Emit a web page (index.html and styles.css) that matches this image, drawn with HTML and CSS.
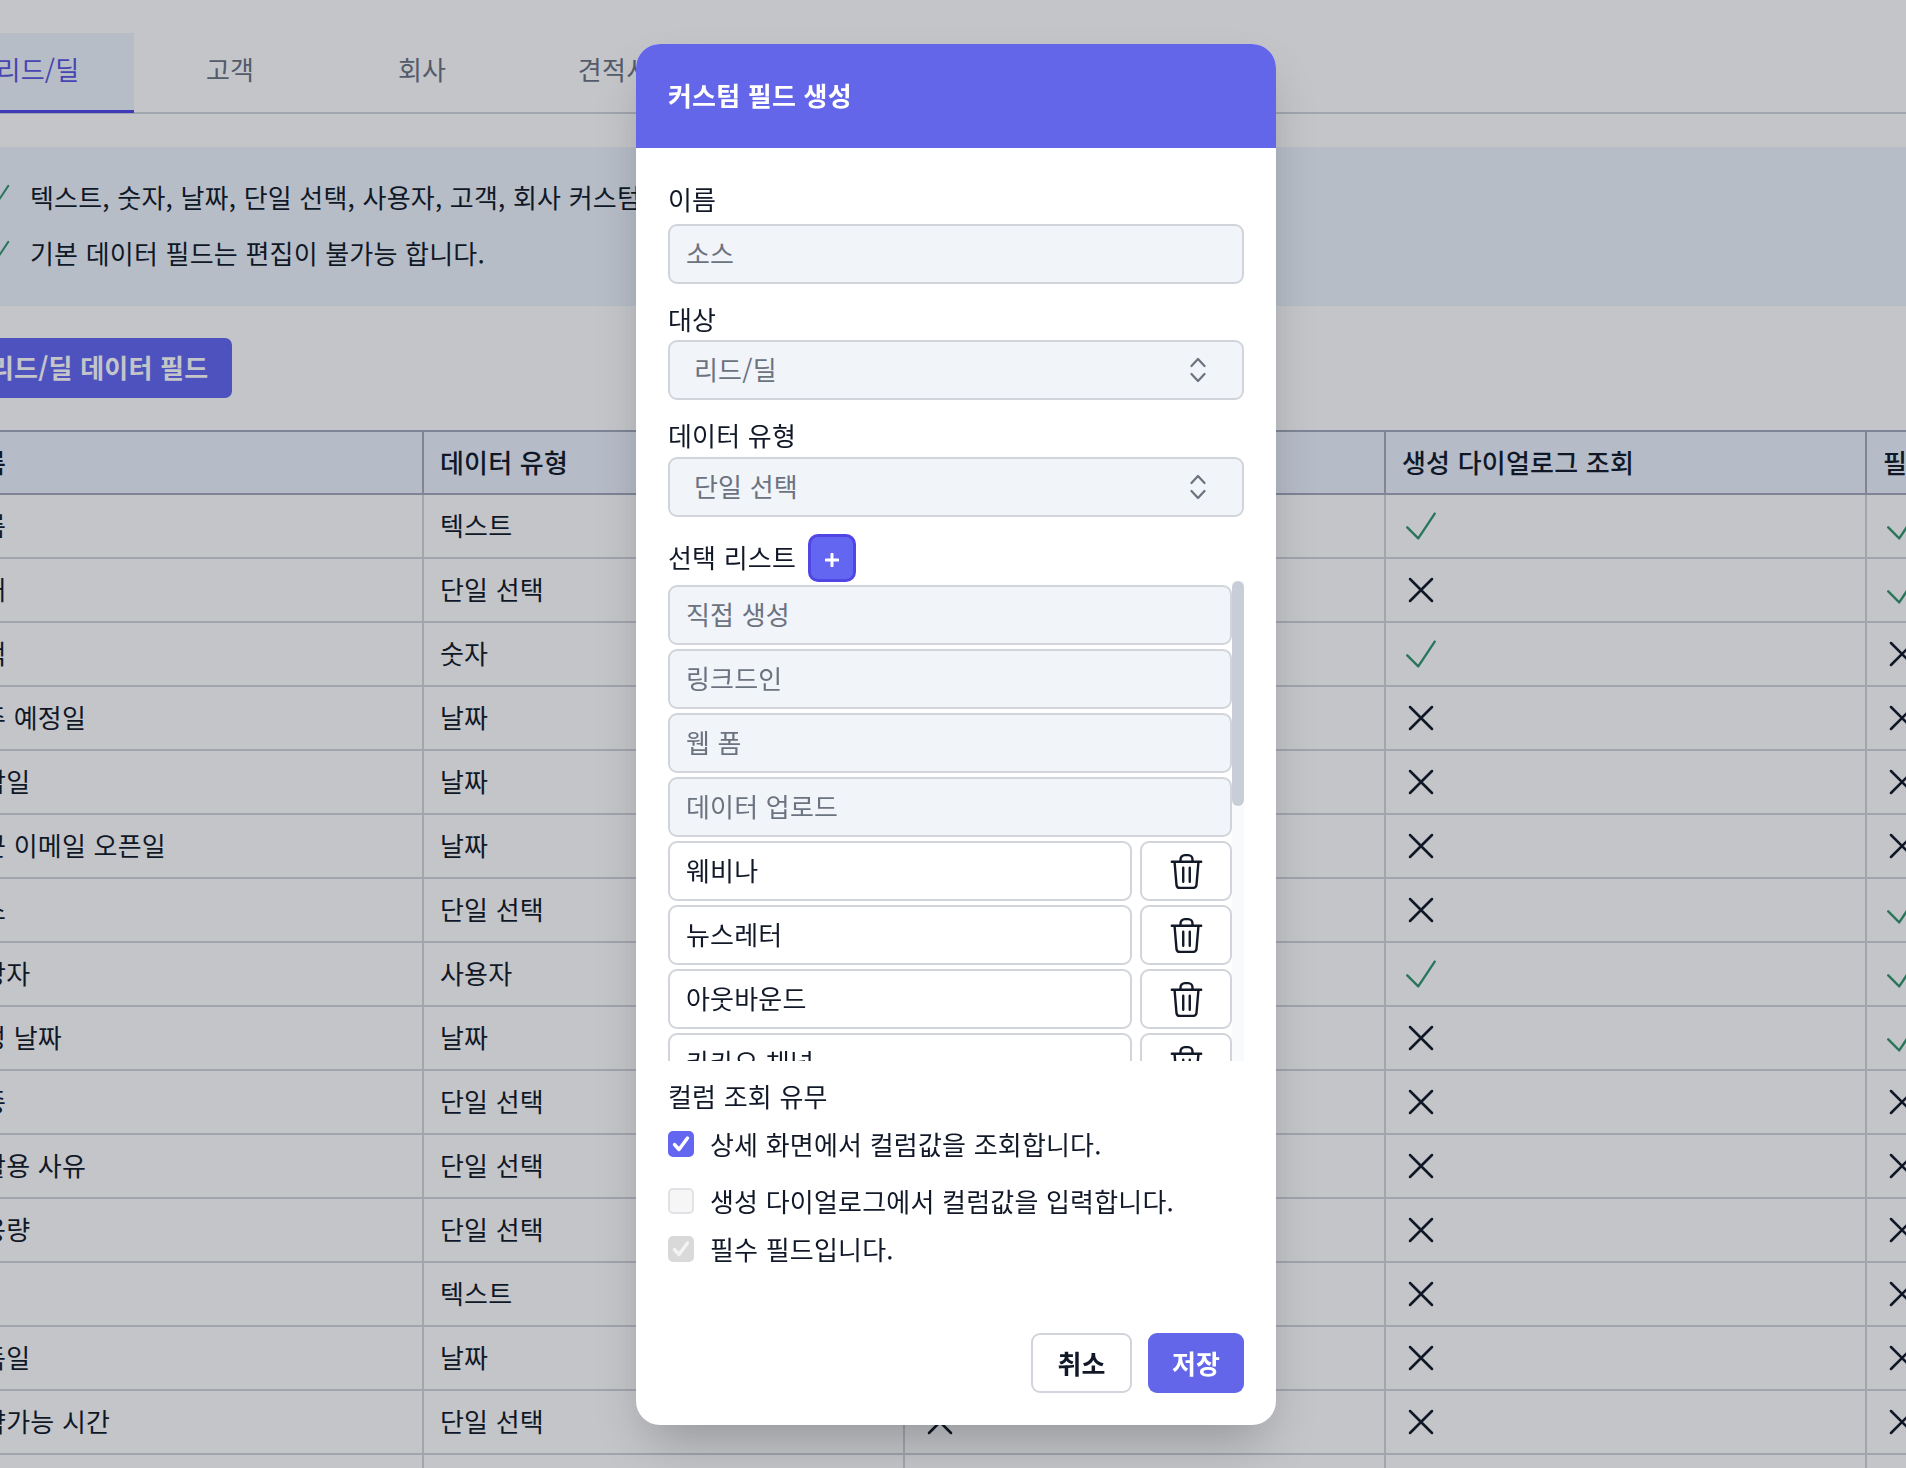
FILE: index.html
```html
<!DOCTYPE html>
<html lang="ko">

<head>
    <meta charset="utf-8">
    <title>커스텀 필드 생성</title>
    <link rel="stylesheet" href="styles.css">
</head>

<body>
    <svg class="icon-defs" width="0" height="0">
        <symbol id="i-check" viewBox="0 0 24 24">
            <path d="M4.5 12.75l6 6 9-13.5" fill="none" stroke="currentColor" stroke-width="1.3" stroke-linecap="round" stroke-linejoin="round" />
        </symbol>
        <symbol id="i-x" viewBox="0 0 24 24">
            <path d="M6 18L18 6M6 6l12 12" fill="none" stroke="currentColor" stroke-width="1.4" stroke-linecap="round" stroke-linejoin="round" />
        </symbol>
        <symbol id="i-trash" viewBox="0 0 30 34">
            <path d="M1.5 8h27M9.500 8V6a4 4 0 0 1 4-4h3a4 4 0 0 1 4 4v2M4 8l1.800 21.200a3 3 0 0 0 3 2.800h12.400a3 3 0 0 0 3-2.800L26 8M12 13.500v13M18 13.500v13" fill="none" stroke="currentColor" stroke-width="2.200" stroke-linecap="round" stroke-linejoin="round" />
        </symbol>
        <symbol id="i-updown" viewBox="0 0 16 26">
            <path d="M1.500 9L8 2l6.500 7M1.500 17L8 24l6.500-7" fill="none" stroke="currentColor" stroke-width="2.200" stroke-linecap="round" stroke-linejoin="round" />
        </symbol>
        <symbol id="i-tick" viewBox="0 0 26 26">
            <path d="M6.500 13.500l4.500 5 8.500-11.500" fill="none" stroke="currentColor" stroke-width="3.400" stroke-linecap="round" stroke-linejoin="round" />
        </symbol>
    </svg>

    <div class="page">
        <nav class="tabs">
            <a class="tab active">리드/딜</a>
            <a class="tab">고객</a>
            <a class="tab">회사</a>
            <a class="tab">견적서</a>
        </nav>

        <ul class="info">
            <li><svg class="info-icon"><use href="#i-check" /></svg>텍스트, 숫자, 날짜, 단일 선택, 사용자, 고객, 회사 커스텀 필드 생성이 가능합니다.</li>
            <li><svg class="info-icon"><use href="#i-check" /></svg>기본 데이터 필드는 편집이 불가능 합니다.</li>
        </ul>

        <button class="section-button">리드/딜 데이터 필드</button>

        <table class="fields">
            <thead>
                <tr>
                    <th>이름</th>
                    <th>데이터 유형</th>
                    <th>상세 화면 조회</th>
                    <th>생성 다이얼로그 조회</th>
                    <th>필수 필드</th>
                </tr>
            </thead>
            <tbody>
                <tr><td>이름</td><td>텍스트</td><td><svg class="yes"><use href="#i-check" /></svg></td><td><svg class="yes"><use href="#i-check" /></svg></td><td><svg class="yes"><use href="#i-check" /></svg></td></tr>
                <tr><td>상태</td><td>단일 선택</td><td><svg class="yes"><use href="#i-check" /></svg></td><td><svg class="no"><use href="#i-x" /></svg></td><td><svg class="yes"><use href="#i-check" /></svg></td></tr>
                <tr><td>금액</td><td>숫자</td><td><svg class="yes"><use href="#i-check" /></svg></td><td><svg class="yes"><use href="#i-check" /></svg></td><td><svg class="no"><use href="#i-x" /></svg></td></tr>
                <tr><td>수주 예정일</td><td>날짜</td><td><svg class="yes"><use href="#i-check" /></svg></td><td><svg class="no"><use href="#i-x" /></svg></td><td><svg class="no"><use href="#i-x" /></svg></td></tr>
                <tr><td>마감일</td><td>날짜</td><td><svg class="yes"><use href="#i-check" /></svg></td><td><svg class="no"><use href="#i-x" /></svg></td><td><svg class="no"><use href="#i-x" /></svg></td></tr>
                <tr><td>최근 이메일 오픈일</td><td>날짜</td><td><svg class="yes"><use href="#i-check" /></svg></td><td><svg class="no"><use href="#i-x" /></svg></td><td><svg class="no"><use href="#i-x" /></svg></td></tr>
                <tr><td>소스</td><td>단일 선택</td><td><svg class="yes"><use href="#i-check" /></svg></td><td><svg class="no"><use href="#i-x" /></svg></td><td><svg class="yes"><use href="#i-check" /></svg></td></tr>
                <tr><td>담당자</td><td>사용자</td><td><svg class="yes"><use href="#i-check" /></svg></td><td><svg class="yes"><use href="#i-check" /></svg></td><td><svg class="yes"><use href="#i-check" /></svg></td></tr>
                <tr><td>생성 날짜</td><td>날짜</td><td><svg class="yes"><use href="#i-check" /></svg></td><td><svg class="no"><use href="#i-x" /></svg></td><td><svg class="yes"><use href="#i-check" /></svg></td></tr>
                <tr><td>업종</td><td>단일 선택</td><td><svg class="no"><use href="#i-x" /></svg></td><td><svg class="no"><use href="#i-x" /></svg></td><td><svg class="no"><use href="#i-x" /></svg></td></tr>
                <tr><td>미활용 사유</td><td>단일 선택</td><td><svg class="no"><use href="#i-x" /></svg></td><td><svg class="no"><use href="#i-x" /></svg></td><td><svg class="no"><use href="#i-x" /></svg></td></tr>
                <tr><td>사용량</td><td>단일 선택</td><td><svg class="no"><use href="#i-x" /></svg></td><td><svg class="no"><use href="#i-x" /></svg></td><td><svg class="no"><use href="#i-x" /></svg></td></tr>
                <tr><td></td><td>텍스트</td><td><svg class="no"><use href="#i-x" /></svg></td><td><svg class="no"><use href="#i-x" /></svg></td><td><svg class="no"><use href="#i-x" /></svg></td></tr>
                <tr><td>취득일</td><td>날짜</td><td><svg class="no"><use href="#i-x" /></svg></td><td><svg class="no"><use href="#i-x" /></svg></td><td><svg class="no"><use href="#i-x" /></svg></td></tr>
                <tr><td>예약가능 시간</td><td>단일 선택</td><td><svg class="no"><use href="#i-x" /></svg></td><td><svg class="no"><use href="#i-x" /></svg></td><td><svg class="no"><use href="#i-x" /></svg></td></tr>
                <tr><td></td><td></td><td></td><td></td><td></td></tr>
            </tbody>
        </table>
    </div>

    <div class="overlay"></div>

    <div class="modal">
        <div class="modal-header">커스텀 필드 생성</div>
        <div class="modal-body">
            <div class="label label-name">이름</div>
            <div class="field disabled">소스</div>

            <div class="label label-target">대상</div>
            <div class="field disabled select">리드/딜<svg class="updown"><use href="#i-updown" /></svg></div>

            <div class="label label-type">데이터 유형</div>
            <div class="field disabled select">단일 선택<svg class="updown"><use href="#i-updown" /></svg></div>

            <div class="list-title">
                <span>선택 리스트</span>
                <button class="add-button">
                    <svg width="14" height="14" viewBox="0 0 14 14"><path d="M7 1v12M1 7h12" stroke="#fff" stroke-width="3" stroke-linecap="round" /></svg>
                </button>
            </div>

            <div class="option-scroll">
                <div class="option-list">
                    <div class="field disabled">직접 생성</div>
                    <div class="field disabled">링크드인</div>
                    <div class="field disabled">웹 폼</div>
                    <div class="field disabled">데이터 업로드</div>
                    <div class="option-row"><div class="field">웨비나</div><button class="trash"><svg><use href="#i-trash" /></svg></button></div>
                    <div class="option-row"><div class="field">뉴스레터</div><button class="trash"><svg><use href="#i-trash" /></svg></button></div>
                    <div class="option-row"><div class="field">아웃바운드</div><button class="trash"><svg><use href="#i-trash" /></svg></button></div>
                    <div class="option-row"><div class="field">카카오 채널</div><button class="trash"><svg><use href="#i-trash" /></svg></button></div>
                </div>
                <div class="scroll-track"><div class="scroll-thumb"></div></div>
            </div>

            <div class="label label-column">컬럼 조회 유무</div>
            <div class="check-row row-detail"><span class="box on"><svg><use href="#i-tick" /></svg></span>상세 화면에서 컬럼값을 조회합니다.</div>
            <div class="check-row row-create"><span class="box"></span>생성 다이얼로그에서 컬럼값을 입력합니다.</div>
            <div class="check-row row-required"><span class="box locked"><svg><use href="#i-tick" /></svg></span>필수 필드입니다.</div>

            <div class="modal-actions">
                <button class="btn-cancel">취소</button>
                <button class="btn-save">저장</button>
            </div>
        </div>
    </div>
</body>

</html>
```
FILE: styles.css
```css
* {
    box-sizing: border-box;
}

html,
body {
    margin: 0;
    height: 1468px;
    overflow: hidden;
}

body {
    font-family: "Noto Sans CJK KR", "Noto Sans", sans-serif;
    font-size: 26px;
    letter-spacing: 0.2px;
    color: #111827;
    background: #fff;
}

button {
    font: inherit;
    letter-spacing: inherit;
    cursor: pointer;
}

.icon-defs {
    position: absolute;
}

/* page behind the dialog, cut off on the left */
.page {
    margin-left: -58px;
    width: 2500px;
    padding-top: 33px;
}

.tabs {
    display: flex;
    border-bottom: 2px solid #d1d5db;
    height: 81px;
}

.tab {
    width: 192px;
    height: 80px;
    line-height: 72px;
    text-align: center;
    color: #6b7280;
}

.tab.active {
    background: #eff4fd;
    color: #5a55e0;
    border-bottom: 3px solid #4f46e5;
}

.info {
    list-style: none;
    margin: 33px 0 0;
    padding: 21px 0 0 37px;
    height: 159px;
    background: #eef4fb;
}

.info li {
    display: flex;
    align-items: center;
    height: 56px;
}

.info-icon {
    flex: none;
    width: 36px;
    height: 36px;
    margin-right: 15px;
    color: #33966c;
}

.section-button {
    display: block;
    margin: 32px 0 0 24px;
    height: 60px;
    padding: 0 24px 4px;
    border: none;
    border-radius: 7px;
    background: #6366f1;
    color: #fff;
    font-weight: 700;
}

.fields {
    margin-top: 32px;
    border-collapse: collapse;
    table-layout: fixed;
    width: 2405px;
}

.fields th,
.fields td {
    width: 481px;
    text-align: left;
}

.fields th {
    height: 63px;
    padding: 0 16px 2px;
    font-weight: 500;
    background: #edf2fc;
    border: 2px solid #a4a9bb;
}

.fields td {
    height: 64px;
    padding: 0 16px 4px;
    border: 2px solid #d1d5db;
    border-top: none;
}

.fields th:first-child,
.fields td:first-child {
    border-left: none;
}

.fields td svg {
    display: block;
    width: 44px;
    height: 44px;
    margin: 4px 0 0 -3px;
}

.yes {
    color: #33966c;
}

.no {
    color: #111827;
}

.overlay {
    position: fixed;
    inset: 0;
    background: rgba(17, 24, 39, 0.25);
}

/* dialog */
.modal {
    position: fixed;
    left: 636px;
    top: 44px;
    width: 640px;
    height: 1381px;
    background: #fff;
    border-radius: 24px;
    overflow: hidden;
    box-shadow: 0 25px 50px -12px rgba(0, 0, 0, 0.25);
}

.modal-header {
    height: 104px;
    padding: 0 32px;
    line-height: 102px;
    background: #6366e8;
    color: #fff;
    font-weight: 700;
}

.modal-body {
    padding: 32px 32px 0;
}

.label {
    height: 36px;
    line-height: 36px;
}

.label-name {
    margin-top: 1px;
    margin-bottom: 7px;
}

.label-target {
    margin-top: 17px;
    margin-bottom: 3px;
}

.label-type {
    margin-top: 17px;
    margin-bottom: 4px;
}

.field {
    position: relative;
    height: 60px;
    line-height: 54px;
    padding: 0 16px;
    border: 2px solid #d1d5db;
    border-radius: 9px;
    background: #fff;
}

.field.disabled {
    background: #f1f4f8;
    color: #6b7280;
}

.field.select {
    padding-left: 24px;
}

.updown {
    position: absolute;
    right: 36px;
    top: 15px;
    width: 16px;
    height: 26px;
    color: #6b7280;
}

.list-title {
    display: flex;
    align-items: center;
    gap: 12px;
    margin-top: 17px;
    height: 48px;
}

.list-title span {
    padding-bottom: 4px;
}

.add-button {
    display: flex;
    align-items: center;
    justify-content: center;
    width: 48px;
    height: 48px;
    padding: 4px 0 0;
    border: 3px solid #4f46e5;
    border-radius: 10px;
    background: #6366f1;
}

/* the browser hides real scrollbars here, so the bar is drawn over the list */
.option-scroll {
    position: relative;
    margin-top: -1px;
    height: 480px;
    padding: 4px 12px 0 0;
    overflow: hidden;
}

.option-list {
    display: flex;
    flex-direction: column;
    gap: 4px;
}

.option-list .field,
.option-row {
    flex: none;
}

.scroll-track {
    position: absolute;
    top: 0;
    right: 0;
    bottom: 0;
    width: 12px;
    background: #f9fafc;
}

.scroll-thumb {
    height: 225px;
    background: #c8cdd8;
    border-radius: 6px;
}

.option-row {
    display: flex;
    gap: 8px;
    height: 60px;
}

.option-row .field {
    flex: 1;
}

.trash {
    display: flex;
    align-items: center;
    justify-content: center;
    width: 92px;
    height: 60px;
    padding: 0;
    background: #fff;
    border: 2px solid #d1d5db;
    border-radius: 9px;
    color: #111827;
}

.trash svg {
    width: 33px;
    height: 37px;
}

.label-column {
    margin-top: 17px;
}

.check-row {
    display: flex;
    align-items: center;
    gap: 16px;
    height: 36px;
}

.row-detail {
    margin-top: 11px;
}

.row-create {
    margin-top: 21px;
}

.row-required {
    margin-top: 12px;
}

.box {
    flex: none;
    width: 26px;
    height: 26px;
    margin-top: 2px;
    border: 2px solid #e0e2e6;
    border-radius: 5px;
    background: #f6f6f7;
}

.box svg {
    display: block;
    width: 26px;
    height: 26px;
    margin: -2px;
}

.box.on {
    border-color: #6366f1;
    background: #6366f1;
    color: #fff;
}

.box.locked {
    border-color: #d9d9d9;
    background: #d9d9d9;
    color: #f3f3f3;
}

.modal-actions {
    display: flex;
    justify-content: flex-end;
    gap: 16px;
    margin-top: 67px;
}

.btn-cancel,
.btn-save {
    height: 60px;
    padding-bottom: 3px;
    border-radius: 9px;
    font-weight: 700;
}

.btn-cancel {
    width: 101px;
    background: #fff;
    border: 2px solid #d1d5db;
    color: #111827;
}

.btn-save {
    width: 96px;
    background: #6366e8;
    border: none;
    color: #fff;
}
```
